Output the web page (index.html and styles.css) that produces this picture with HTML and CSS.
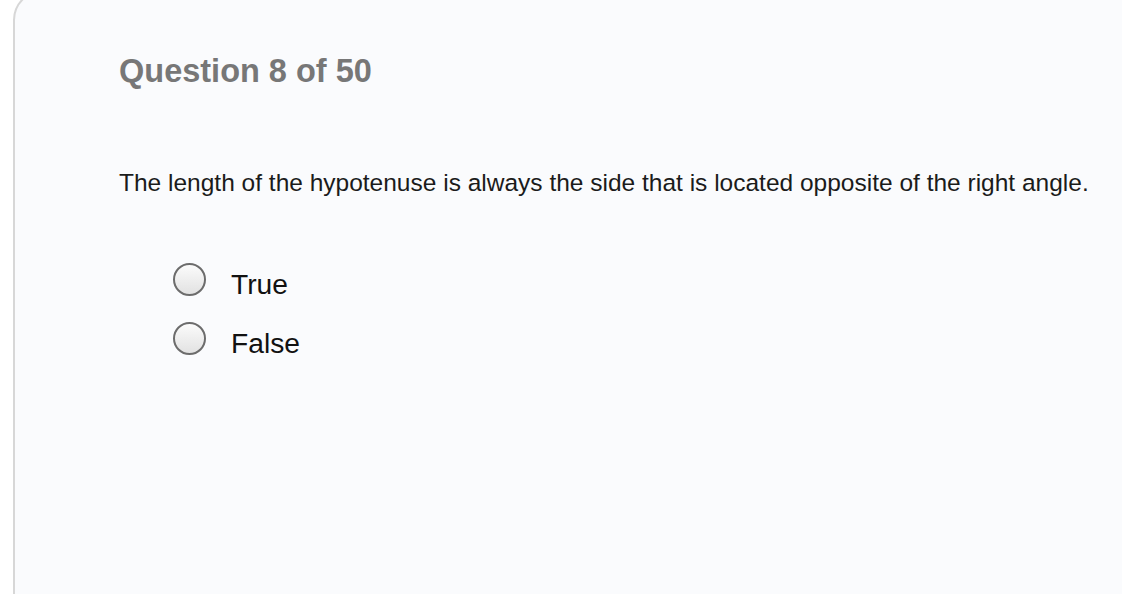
FILE: index.html
```html
<!DOCTYPE html>
<html lang="en">
<head>
<meta charset="utf-8">
<title>Question 8 of 50</title>
<link rel="stylesheet" href="styles.css">
</head>
<body>
<div class="card">
  <h1 class="q-title">Question 8 of 50</h1>
  <p class="q-text">The length of the hypotenuse is always the side that is located opposite of the right angle.</p>
  <ul class="options">
    <li class="option"><span class="radio"></span><span class="label">True</span></li>
    <li class="option"><span class="radio"></span><span class="label">False</span></li>
  </ul>
</div>
</body>
</html>
```
FILE: styles.css
```css
html, body {
  margin: 0;
  padding: 0;
  background: #ffffff;
  overflow: hidden;
  height: 594px;
}

body {
  font-family: "Liberation Sans", Arial, sans-serif;
}

.card {
  box-sizing: border-box;
  margin: -10px 0 0 13px;
  width: 1180px;
  height: 700px;
  border: 2px solid #d7d7d7;
  border-radius: 30px;
  background: #fafbfd;
  padding: 63px 0 0 104px;
}

.q-title {
  margin: 0;
  font-size: 32.5px;
  line-height: 32px;
  font-weight: bold;
  color: #777777;
}

.q-text {
  margin: 81px 0 0 0;
  font-size: 24.5px;
  line-height: 29px;
  color: #1b1b1b;
}

.options {
  list-style: none;
  margin: 66px 0 0 54px;
  padding: 0;
  display: flex;
  flex-direction: column;
  gap: 26px;
}

.option {
  display: flex;
  align-items: center;
  gap: 25px;
  height: 33px;
}

.radio {
  box-sizing: border-box;
  width: 33px;
  height: 33px;
  border-radius: 50%;
  border: 2px solid #6c6c6c;
  background: linear-gradient(#fbfbfb, #e2e2e2);
  flex: none;
}

.label {
  font-size: 28.2px;
  line-height: 32px;
  padding-top: 8px;
  color: #111111;
}
```
